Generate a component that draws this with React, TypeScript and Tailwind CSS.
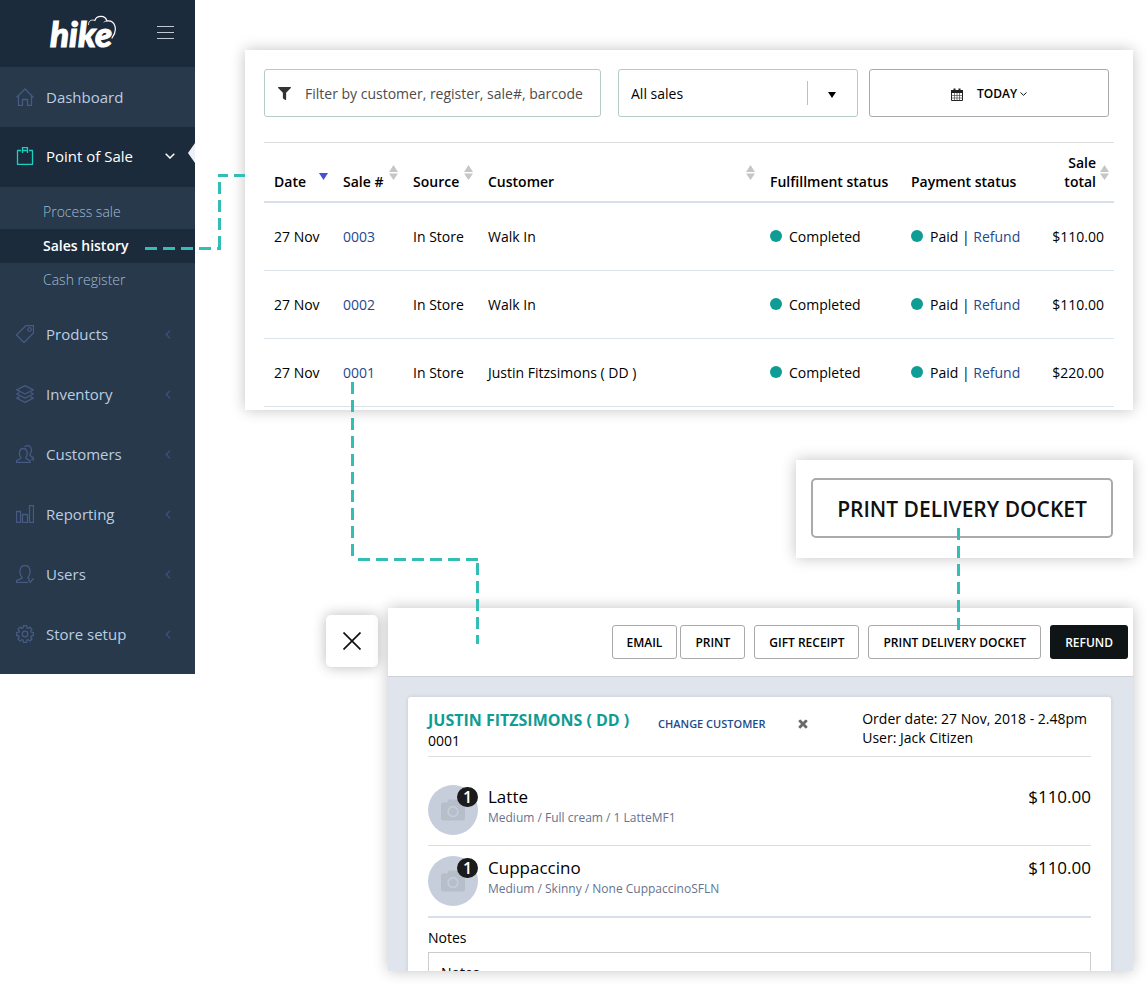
import React from "react";
import { FaCamera, FaFilter, FaTimes } from "react-icons/fa";

type IconName =
  | "home"
  | "bag"
  | "tag"
  | "layers"
  | "people"
  | "bars"
  | "user"
  | "gear";

const iconShapes: Record<IconName, React.ReactNode> = {
  home: <path d="M.5 9.500 9 1l8.500 8.500M2.500 8v9.500h4v-6h5v6h4V8" />,
  bag: (
    <>
      <path d="M5 3.500H1.500v14h15v-14H13" />
      <path d="M6.500 6V.5h5V6M6.500 3.500h5" />
    </>
  ),
  tag: (
    <>
      <path d="M10 .5h7.500V8L8 17.500.500 10z" />
      <circle cx="13.500" cy="4.500" r="1.800" />
    </>
  ),
  layers: (
    <>
      <path d="M9 .7 17.300 4.800 9 9 .7 4.800z" />
      <path d="M3.500 7.500.7 9 9 13.200 17.300 9l-2.800-1.500" />
      <path d="M3.500 11.800.7 13.200 9 17.400l8.300-4.200-2.800-1.400" />
    </>
  ),
  people: (
    <>
      <path d="M.5 17.500v-1.700c1.500-1.300 4.500-1.300 4.500-3-2.700-3-2-9.300 2.300-9.300s5 6.300 2.300 9.300c0 1.700 3.200 1.700 4.400 3v1.700z" />
      <path d="M8.500 1.700C12.500-1 16 2 15.300 6c-.2 1.700-.8 2.700-1.500 3.500 0 2 2.300 1.800 3.700 3.300v1.700h-2.300" />
    </>
  ),
  bars: <path d="M.5 6.500h4v11h-4zM6.500 9.500h5v8h-5zM13.500.5h4v17h-4z" />,
  user: (
    <>
      <path d="M12 17.500H.5v-1.700c1.500-1.500 5.700-1.500 5.700-3.300C2.700 9 3 .5 9 .5s6.300 8.500 2.800 12c0 1 1 1.400 2.200 1.800" />
      <path d="m12.500 15 1.800 2.300 3.300-3.800" />
    </>
  ),
  gear: (
    <>
      <path d="M7.500.6h3l.4 2.200 1.300.6L14 2.100 16 4.200l-1.300 1.700.5 1.300 2.200.4v2.900l-2.200.4-.5 1.300 1.300 1.800-2 2-1.800-1.300-1.300.5-.4 2.200h-3l-.4-2.200-1.300-.5L4 16l-2-2 1.300-1.800-.5-1.300-2.200-.4V7.600l2.200-.4.5-1.300L2 4.200l2-2.100 1.800 1.300 1.300-.6z" />
      <circle cx="9" cy="9" r="2.800" />
    </>
  ),
};

function LineIcon({ name }: { name: IconName }) {
  return (
    <svg
      viewBox="0 0 18 18"
      className="size-[18px] shrink-0"
      fill="none"
      stroke="currentColor"
      strokeWidth="1.300"
      strokeLinejoin="round"
      aria-hidden="true"
    >
      {iconShapes[name]}
    </svg>
  );
}

function Logo() {
  return (
    <div className="relative" aria-label="hike">
      <span className="block font-[Lato] text-[35px] leading-[36px] font-black text-white italic [-webkit-text-stroke:1px_#ffffff]">
        hike
      </span>
      <svg
        viewBox="0 0 30 24"
        className="absolute top-0 left-[37px] h-6 w-[30px]"
        fill="none"
        stroke="#ffffff"
        strokeWidth="1.200"
        strokeLinecap="round"
        aria-hidden="true"
      >
        <path d="M1.500 9.500C1.500 6 4 4 8 5.500" strokeWidth=".9" />
        <path d="M8 5C10 .3 18-.3 20 6 28.500 5 31 15 25 23" />
        <path d="M20 6c-1.500 0-2.500.5-3 1" strokeWidth=".8" />
      </svg>
    </div>
  );
}

const lowerMenu: { icon: IconName; label: string }[] = [
  { icon: "tag", label: "Products" },
  { icon: "layers", label: "Inventory" },
  { icon: "people", label: "Customers" },
  { icon: "bars", label: "Reporting" },
  { icon: "user", label: "Users" },
  { icon: "gear", label: "Store setup" },
];

function Sidebar() {
  return (
    <aside className="w-[195px] shrink-0 bg-[#27394a] pb-2.5 text-[15px] text-[#bccde2]">
      <div className="flex h-[67px] items-center justify-between bg-[#1c2b3c] pr-[21px] pb-0.5 pl-[50px]">
        <Logo />
        <button type="button" aria-label="Toggle menu" className="flex flex-col gap-[5px]">
          <span className="h-px w-[17px] bg-[#c3c9d0]" />
          <span className="h-px w-[17px] bg-[#c3c9d0]" />
          <span className="h-px w-[17px] bg-[#c3c9d0]" />
        </button>
      </div>
      <nav>
        <a href="#dashboard" className="flex h-[60px] items-center gap-3 pl-4">
          <span className="text-[#465a83]">
            <LineIcon name="home" />
          </span>
          Dashboard
        </a>
        <a
          href="#pos"
          className="relative flex h-[60px] items-center gap-3 bg-[#1c2b3c] pr-5 pb-0.5 pl-4 text-white"
        >
          <span className="text-[#1cd0c0]">
            <LineIcon name="bag" />
          </span>
          <span className="flex-1">Point of Sale</span>
          <svg viewBox="0 0 10 6" className="h-[6px] w-[10px]" fill="none" stroke="#ffffff" strokeWidth="1.500">
            <path d="M.7.700 5 5 9.300.7" />
          </svg>
          <svg viewBox="0 0 7 20" className="absolute top-4 right-0 h-5 w-[7px]" fill="#edf0f6">
            <path d="M7 0v20L0 10z" />
          </svg>
        </a>
        <div className="pt-2 pb-[7px] text-[14px] font-light text-[#a3bbd6]">
          <a href="#process" className="flex h-[34px] items-center pb-0.5 pl-[43px]">
            Process sale
          </a>
          <a
            href="#history"
            className="flex h-[34px] items-center bg-[#1c2b3c] pb-0.5 pl-[43px] font-semibold text-white"
          >
            Sales history
          </a>
          <a href="#cash" className="flex h-[34px] items-center pb-0.5 pl-[43px]">
            Cash register
          </a>
        </div>
        {lowerMenu.map(({ icon, label }) => (
          <a key={label} href="#menu" className="flex h-[60px] items-center gap-3 pr-6 pl-4">
            <span className="text-[#465a83]">
              <LineIcon name={icon} />
            </span>
            <span className="flex-1">{label}</span>
            <svg viewBox="0 0 6 10" className="h-[9px] w-[6px]" fill="none" stroke="#3d5480" strokeWidth="1.300">
              <path d="M5.300.7 1 5l4.300 4.300" />
            </svg>
          </a>
        ))}
      </nav>
    </aside>
  );
}

function SortIcon({ active = false }: { active?: boolean }) {
  return (
    <svg viewBox="0 0 9 15" className="h-[15px] w-[9px] shrink-0 self-center" aria-hidden="true">
      {active ? (
        <path d="M0 8h9l-4.500 7z" fill="#4850cf" />
      ) : (
        <path d="M0 7h9L4.500 0zM0 8.500h9L4.500 15z" fill="#c6c6c6" />
      )}
    </svg>
  );
}

const columns: { label: string; sort: "none" | "idle" | "active"; width: string }[] = [
  { label: "Date", sort: "active", width: "w-[69px]" },
  { label: "Sale #", sort: "idle", width: "w-[70px]" },
  { label: "Source", sort: "idle", width: "w-[75px]" },
  { label: "Customer", sort: "idle", width: "" },
  { label: "Fulfillment status", sort: "none", width: "w-[141px]" },
  { label: "Payment status", sort: "none", width: "w-[140px]" },
  { label: "Sale total", sort: "idle", width: "w-[73px]" },
];

const sales = [
  { id: "0003", customer: "Walk In", total: "$110.00" },
  { id: "0002", customer: "Walk In", total: "$110.00" },
  { id: "0001", customer: "Justin Fitzsimons ( DD )", total: "$220.00" },
];

function Status({ children }: { children: React.ReactNode }) {
  return (
    <span className="flex items-center gap-[7px] whitespace-nowrap">
      <span className="size-3 rounded-full bg-[#0e9c95]" />
      <span>{children}</span>
    </span>
  );
}

function SalesPanel() {
  return (
    <section className="bg-white px-[19px] pt-[19px] pb-[3px] shadow-[0_0_14px_rgba(0,0,0,0.24)]">
      <div className="mr-[5px] flex h-12">
        <label className="mr-[17px] flex min-w-0 flex-1 items-center gap-[14px] rounded-[3px] border border-[#b4cbc7] pl-[13px]">
          <FaFilter className="size-[13px] text-[#333]" aria-hidden="true" />
          <input
            type="text"
            aria-label="Filter sales"
            placeholder="Filter by customer, register, sale#, barcode"
            className="min-w-0 flex-1 outline-none placeholder:text-[#4c4c4c]"
          />
        </label>
        <div className="relative mr-[11px] w-60">
          <select
            aria-label="Sales filter"
            className="h-full w-full appearance-none rounded-[3px] border border-[#b4cbc7] bg-white pl-3"
          >
            <option>All sales</option>
          </select>
          <span className="pointer-events-none absolute top-3 right-[50px] h-6 w-px bg-[#b4c4c2]" />
          <svg viewBox="0 0 8 6" className="pointer-events-none absolute top-[23px] right-[22px] h-[6px] w-2">
            <path d="M0 0h8L4 6z" />
          </svg>
        </div>
        <button
          type="button"
          className="flex w-60 items-center justify-center rounded-[3px] border border-[#aaa] pt-0.5 text-[12px] font-semibold"
        >
          <svg viewBox="0 0 12 13" className="mr-[14px] h-[13px] w-3" aria-hidden="true">
            <path d="M.5 2.500h11v10H.5z" fill="#fff" stroke="#222" />
            <path d="M0 2h12v3H0z" fill="#222" />
            <path d="M3.500.5v3M8.500.5v3" stroke="#222" strokeWidth="2" />
            <path d="M3.500 5v8M6 5v8M8.500 5v8M0 7.500h12M0 10h12" stroke="#333" strokeWidth=".6" />
          </svg>
          TODAY
          <svg viewBox="0 0 7 4" className="ml-[3px] h-1 w-[7px]" fill="none" stroke="#111">
            <path d="M.5.500l3 2.800 3-2.800" />
          </svg>
        </button>
      </div>
      <table className="mt-[25px] w-full table-fixed border-collapse">
        <thead>
          <tr className="border-t border-b-2 border-t-[#dcdfe2] border-b-[#d7dfe8]">
            {columns.map(({ label, sort, width }) => (
              <th key={label} scope="col" className={`${width} py-[10px] pl-[10px] font-semibold`}>
                <div
                  className={
                    label === "Sale total"
                      ? "flex h-[38px] items-end justify-end gap-1 pr-[5px] text-right leading-[19px]"
                      : "flex h-[38px] items-end justify-between pr-[5px] text-left leading-[19px] whitespace-nowrap"
                  }
                >
                  <span>{label}</span>
                  {sort !== "none" && <SortIcon active={sort === "active"} />}
                </div>
              </th>
            ))}
          </tr>
        </thead>
        <tbody>
          {sales.map(({ id, customer, total }) => (
            <tr key={id} className="h-[68px] border-b border-[#dbe3ea]">
              <td className="pl-[10px] whitespace-nowrap">27 Nov</td>
              <td className="pl-[10px]">
                <a href="#sale" className="text-[#1e4a8c]">
                  {id}
                </a>
              </td>
              <td className="pl-[10px] whitespace-nowrap">In Store</td>
              <td className="pl-[10px]">{customer}</td>
              <td className="pl-[10px]">
                <Status>Completed</Status>
              </td>
              <td className="pl-[10px]">
                <Status>
                  Paid |{" "}
                  <a href="#refund" className="text-[#1e4a8c]">
                    Refund
                  </a>
                </Status>
              </td>
              <td className="pr-[10px] text-right">{total}</td>
            </tr>
          ))}
        </tbody>
      </table>
    </section>
  );
}

const actionButton =
  "h-[34px] rounded-[3px] border border-[#aaa] bg-white px-[14px] pt-0.5 text-[12px] font-semibold whitespace-nowrap";

const items = [
  { name: "Latte", detail: "Medium / Full cream / 1 LatteMF1", price: "$110.00" },
  { name: "Cuppaccino", detail: "Medium / Skinny / None CuppaccinoSFLN", price: "$110.00" },
];

function ReceiptPanel() {
  return (
    <section className="min-w-0 flex-1 bg-white shadow-[0_0_14px_rgba(0,0,0,0.24)]">
      <div className="flex items-center justify-end gap-[9px] border-b border-[#cfd2d6] py-[17px] pr-[5px]">
        <div className="flex gap-[3px]">
          <button type="button" className={actionButton}>EMAIL</button>
          <button type="button" className={actionButton}>PRINT</button>
        </div>
        <button type="button" className={actionButton}>GIFT RECEIPT</button>
        <button type="button" className={actionButton}>PRINT DELIVERY DOCKET</button>
        <button
          type="button"
          className="h-[34px] rounded-[3px] bg-[#0f1417] px-[15px] pt-0.5 text-[12px] font-semibold text-white"
        >
          REFUND
        </button>
      </div>
      <div className="h-[294px] overflow-hidden bg-[#e0e5ed] pt-5 pr-[22px] pl-5">
        <div className="rounded-[3px] bg-white px-5 pt-3 shadow-[0_0_4px_rgba(0,0,0,0.12)]">
          <header className="flex h-12 items-start border-b border-[#dcdfe2]">
            <div className="w-[230px]">
              <h2 className="text-[16px] leading-[22px] font-bold whitespace-nowrap text-[#0e9c95]">
                JUSTIN FITZSIMONS ( DD )
              </h2>
              <p className="leading-5">0001</p>
            </div>
            <button type="button" className="mt-[7px] text-[11px] leading-4 font-semibold text-[#1e4a8c]">
              CHANGE CUSTOMER
            </button>
            <button type="button" aria-label="Remove customer" className="mt-[9px] ml-8 text-[#666]">
              <FaTimes className="size-3" stroke="currentColor" strokeWidth="30" />
            </button>
            <p className="ml-auto pr-1 leading-[19px] whitespace-nowrap">
              Order date: 27 Nov, 2018 - 2.48pm
              <br />
              User: Jack Citizen
            </p>
          </header>
          <ul className="border-b border-[#d7dfe8] pt-[18px]">
            {items.map(({ name, detail, price }) => (
              <li key={name} className="flex border-b border-[#d7dfe8] py-[10px]">
                <div className="relative mr-[10px] flex size-[50px] items-center justify-center rounded-full bg-[#c6cedb]">
                  <FaCamera className="size-6 text-[#b5bec9]" aria-hidden="true" />
                  <span className="absolute top-[2px] right-0 flex h-5 w-[21px] items-center justify-center rounded-full bg-[#1b1b1b] text-[16px] font-semibold text-white">
                    1
                  </span>
                </div>
                <div className="flex-1">
                  <h3 className="text-[17px] leading-6">{name}</h3>
                  <p className="text-[12px] leading-[18px] text-[#66738f]">{detail}</p>
                </div>
                <span className="text-[17px] leading-6">{price}</span>
              </li>
            ))}
          </ul>
          <label htmlFor="notes" className="mt-[10px] block leading-5">
            Notes
          </label>
          <textarea
            id="notes"
            placeholder="Notes"
            className="mt-1 block h-20 w-full resize-none border border-[#ccc] px-3 py-[10px] leading-5 placeholder:text-black"
          />
        </div>
      </div>
    </section>
  );
}

function Connectors() {
  return (
    <svg
      className="pointer-events-none absolute top-0 left-0 h-[985px] w-[1147px]"
      viewBox="0 0 1147 985"
      fill="none"
      stroke="#33bdb7"
      strokeWidth="3"
      strokeDasharray="12 6"
      aria-hidden="true"
    >
      <path d="M145 248.500H221" />
      <path d="M219.500 248V182" />
      <path d="M218 175.500h10m6 0h11" strokeDasharray="none" />
      <path d="M352.500 382V556" />
      <path d="M358 559.500H478" />
      <path d="M477.500 563V644" />
      <path d="M958.500 528V630" />
    </svg>
  );
}

export default function App() {
  return (
    <div className="relative flex min-h-screen items-start bg-white font-['Open_Sans','Noto_Sans',sans-serif] text-[14px] text-black">
      <Sidebar />
      <main className="flex min-w-0 flex-1 flex-col gap-[50px] pt-[50px] pr-[14px] pb-[14px] pl-[50px]">
        <SalesPanel />
        <div className="self-end bg-white pt-[18px] pr-5 pb-5 pl-[15px] shadow-[0_0_14px_rgba(0,0,0,0.24)]">
          <button
            type="button"
            className="h-[60px] w-[302px] rounded-[5px] border-2 border-[#aaa] pt-1 text-[21px] font-semibold text-[#111]"
          >
            PRINT DELIVERY DOCKET
          </button>
        </div>
        <div className="ml-[81px] flex items-start gap-[10px]">
          <button
            type="button"
            aria-label="Close"
            className="mt-[7px] flex size-[52px] items-center justify-center rounded-[5px] bg-white shadow-[0_0_14px_rgba(0,0,0,0.28)]"
          >
            <svg viewBox="0 0 18 18" className="size-[18px]" fill="none" stroke="#111" strokeWidth="1.700">
              <path d="M.5.500l17 17M17.500.500l-17 17" />
            </svg>
          </button>
          <ReceiptPanel />
        </div>
      </main>
      <Connectors />
    </div>
  );
}
